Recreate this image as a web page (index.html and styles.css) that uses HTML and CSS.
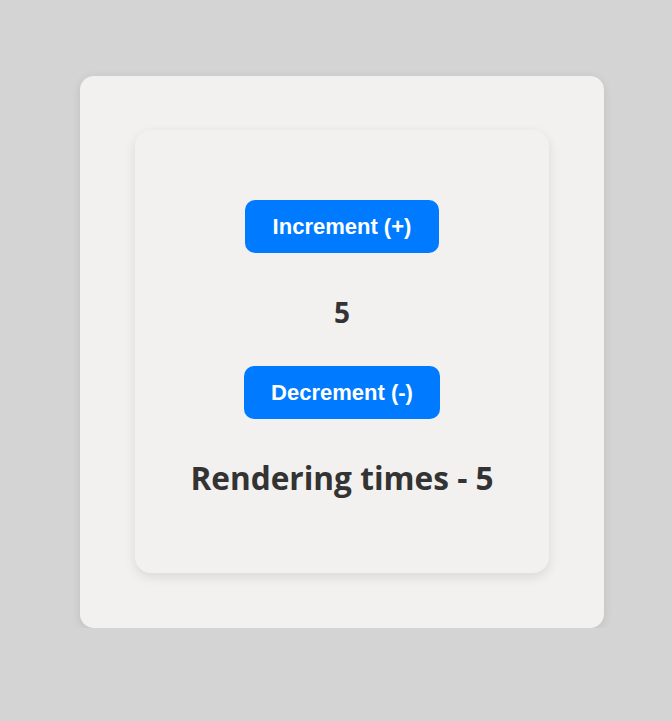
FILE: index.html
```html
<!DOCTYPE html>
<html>
<head>
<meta charset="utf-8">
<link rel="stylesheet" href="styles.css">
</head>
<body>
<div class="outer">
  <div class="inner">
    <button class="btn btn-inc">Increment (+)</button>
    <div class="count">5</div>
    <button class="btn btn-dec">Decrement (-)</button>
    <div class="renders">Rendering times - 5</div>
  </div>
</div>
</body>
</html>
```
FILE: styles.css
```css
html, body {
  margin: 0;
  padding: 0;
  background: #d4d4d4;
}
body {
  padding: 76px 0 0 80px;
  font-family: "Open Sans", "Noto Sans", sans-serif;
}
.outer {
  width: 524px;
  height: 552px;
  box-sizing: border-box;
  padding: 54px 55px 0 55px;
  background: #f2f1ef;
  border-radius: 14px;
  box-shadow: 0 2px 10px rgba(0,0,0,0.1);
}
.inner {
  width: 414px;
  height: 443px;
  box-sizing: border-box;
  background: #f2f1ef;
  border-radius: 16px;
  box-shadow: 0 4px 12px rgba(0,0,0,0.1);
  display: flex;
  flex-direction: column;
  align-items: center;
  padding-top: 70px;
}
.btn {
  font-family: "Liberation Sans", Arial, sans-serif;
  font-weight: bold;
  font-size: 22px;
  color: #fff;
  background: #007bff;
  border: none;
  border-radius: 10px;
  height: 53px;
  padding: 0;
  cursor: pointer;
}
.btn-inc { width: 194px; }
.btn-dec { width: 196px; }
.count {
  font-size: 28px;
  font-weight: bold;
  color: #333;
  line-height: 40px;
  margin: 39px 0 34px;
}
.renders {
  font-size: 31.6px;
  font-weight: bold;
  color: #333;
  line-height: 44px;
  margin-top: 37px;
}
```
